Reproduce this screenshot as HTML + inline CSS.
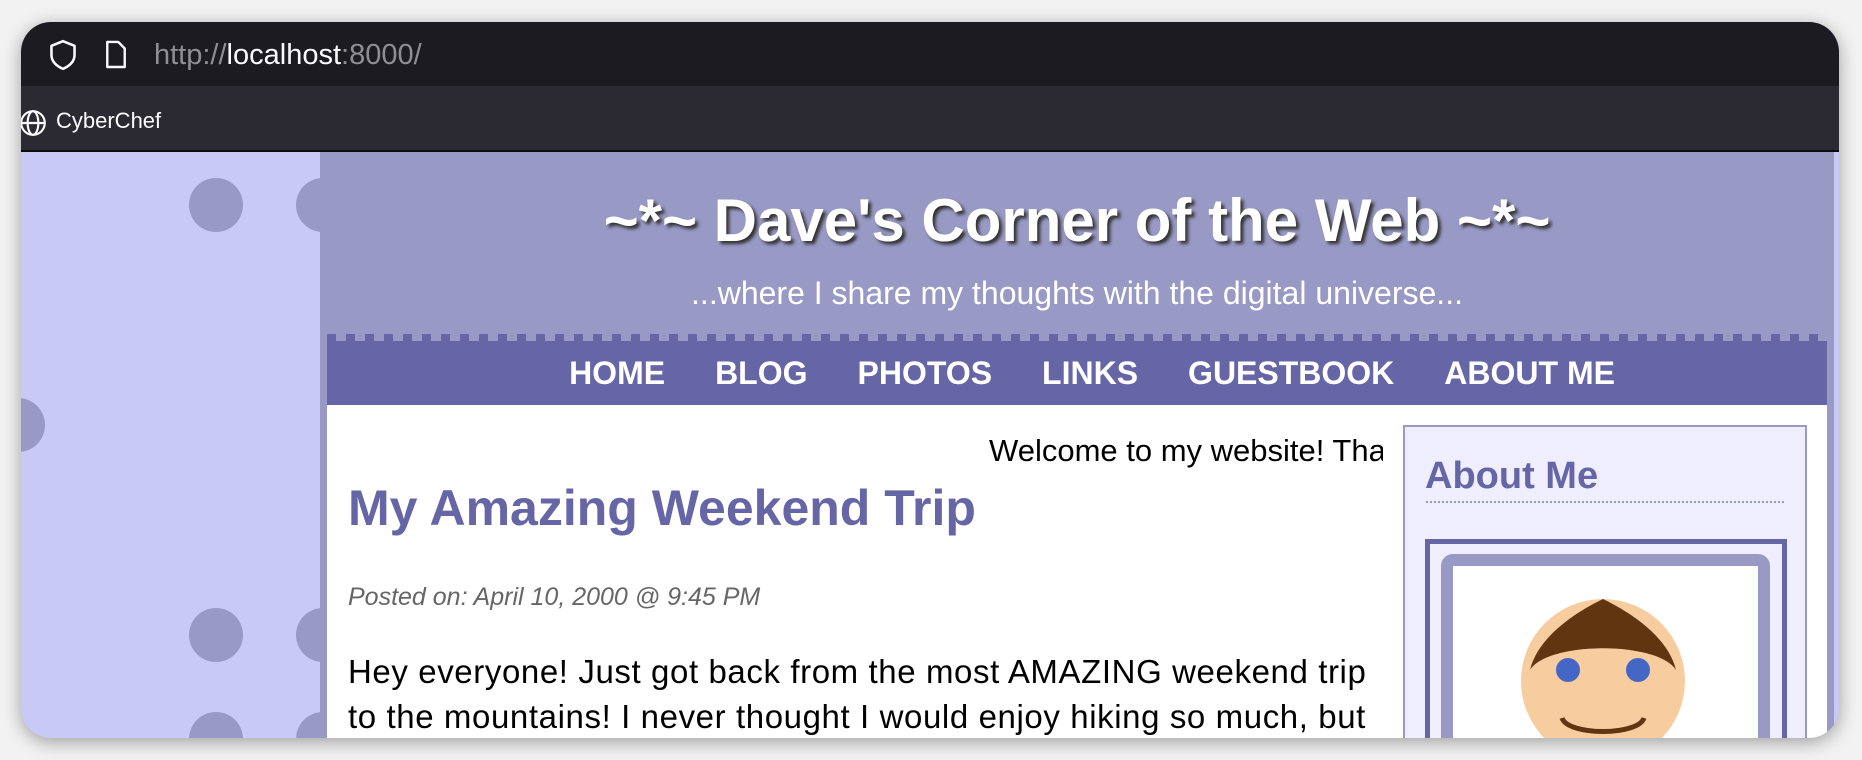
<!DOCTYPE html>
<html><head><meta charset="utf-8"><style>
*{margin:0;padding:0;box-sizing:border-box}
body{width:1862px;height:760px;background:#f2f2f2;overflow:hidden;font-family:"Liberation Sans",sans-serif;position:relative}
.win{position:absolute;left:21px;top:22px;width:1818px;height:716px;border-radius:30px;overflow:hidden;background:#c9c9f5;box-shadow:0 4px 18px rgba(0,0,0,.35)}
.bar1{position:absolute;left:0;top:0;width:100%;height:64px;background:#1c1b22}
.bar2{position:absolute;left:0;top:64px;width:100%;height:66px;background:#2b2a33;border-bottom:2px solid #0c0c0d}
.url{position:absolute;left:133px;top:17px;font-size:29px;color:#8e8e93;white-space:nowrap}
.url b{color:#fbfbfe;font-weight:normal}
.bm{position:absolute;left:35px;top:22px;font-size:22px;color:#fbfbfe;white-space:nowrap}
.dot{position:absolute;width:54px;height:54px;border-radius:50%;background:#9999c6}
.main{position:absolute;left:299px;top:130px;width:1514px;height:586px;background:#9999c6;overflow:hidden}
.title{position:absolute;left:0;width:100%;top:34px;text-align:center;color:#fff;font-weight:bold;font-size:60px;white-space:nowrap;text-shadow:3px 3px 3px #333}
.sub{position:absolute;left:0;width:100%;top:123px;text-align:center;color:#fff;font-size:32px;white-space:nowrap}
.nav{position:absolute;left:7px;top:182px;width:1500px;height:71px;background:#6666a6;border-top:7px solid transparent;background-clip:padding-box;display:flex;justify-content:center;gap:50px;padding-top:14px;padding-left:30px}
.nav a{color:#fff;font-weight:bold;font-size:32px;text-decoration:none;white-space:nowrap}
.content{position:absolute;left:7px;top:253px;width:1500px;height:340px;background:#fff}
.wel{position:absolute;left:662px;top:28px;width:394px;overflow:hidden;white-space:nowrap;font-size:31px;color:#000}
h1{position:absolute;left:21px;top:74px;font-size:50px;color:#6666a6;white-space:nowrap}
.posted{position:absolute;left:21px;top:178px;font-size:25px;font-style:italic;color:#666;white-space:nowrap}
.body{position:absolute;left:21px;top:244px;font-size:33px;letter-spacing:0.6px;line-height:45px;color:#000;width:1100px;white-space:nowrap}
.side{position:absolute;left:1076px;top:20px;width:404px;height:400px;background:#eeeefd;border:2px solid #9999c6}
.side h2{position:absolute;left:20px;top:28px;font-size:38px;color:#6666a6}
.dotl{position:absolute;left:21px;top:74px;width:358px;border-top:2px dotted #9999c6}
.pf{position:absolute;left:20px;top:112px;width:362px;height:300px;border:5px solid #6666a6}
.pi{position:absolute;left:11px;top:10px;width:329px;height:300px;border:12px solid #9999c6;border-radius:12px;background:#fff}
</style></head><body>
<div class="win">
<div class="bar1">
<svg style="position:absolute;left:27px;top:16px" width="30" height="34" viewBox="0 0 26 28"><path d="M13 2 L23 6 V14 C23 20 18 24 13 26 C8 24 3 20 3 14 V6 Z" fill="none" stroke="#fbfbfe" stroke-width="2.2" stroke-linejoin="round"/></svg>
<svg style="position:absolute;left:83px;top:17px" width="24" height="32" viewBox="0 0 22 28"><path d="M3 2 H13 L19 8 V25 H3 Z" fill="none" stroke="#fbfbfe" stroke-width="2.2" stroke-linejoin="round"/></svg>
<div class="url">http://<b>localhost</b>:8000/</div>
</div>
<div class="bar2">
<svg style="position:absolute;left:-3px;top:22px" width="30" height="30" viewBox="0 0 28 28"><g fill="none" stroke="#fbfbfe" stroke-width="2"><circle cx="14" cy="14" r="11"/><ellipse cx="14" cy="14" rx="5" ry="11"/><path d="M3 14H25"/></g></svg>
<div class="bm">CyberChef</div>
</div>
<div class="dot" style="left:168px;top:156px"></div>
<div class="dot" style="left:275px;top:156px"></div>
<div class="dot" style="left:-30px;top:376px"></div>
<div class="dot" style="left:168px;top:586px"></div>
<div class="dot" style="left:275px;top:586px"></div>
<div class="dot" style="left:168px;top:690px"></div>
<div class="dot" style="left:275px;top:690px"></div>
<div class="main">
<div class="title">~*~ Dave's Corner of the Web ~*~</div>
<div class="sub">...where I share my thoughts with the digital universe...</div>
<div class="nav">
<div style="position:absolute;left:0;top:-7px;width:100%;height:7px;background:repeating-linear-gradient(90deg,#6666a6 0 9px,#9999c6 9px 19px)"></div>
<a>HOME</a><a>BLOG</a><a>PHOTOS</a><a>LINKS</a><a>GUESTBOOK</a><a>ABOUT ME</a>
</div>
<div class="content">
<div class="wel">Welcome to my website! Thanks for visiting</div>
<h1>My Amazing Weekend Trip</h1>
<div class="posted">Posted on: April 10, 2000 @ 9:45 PM</div>
<div class="body">Hey everyone! Just got back from the most AMAZING weekend trip<br>to the mountains! I never thought I would enjoy hiking so much, but</div>
<div class="side">
<h2>About Me</h2><div class="dotl"></div>
<div class="pf"><div class="pi">
<svg style="position:absolute;left:65px;top:30px" width="170" height="170" viewBox="0 0 170 170">
<circle cx="85" cy="85" r="82" fill="#f7cd9f"/>
<path d="M12 74 C20 40 60 15 85 3 C110 15 150 40 158 74 C140 45 30 45 12 74 Z" fill="#603510"/>
<circle cx="50" cy="74" r="12" fill="#4466c4"/><circle cx="120" cy="74" r="12" fill="#4466c4"/>
<path d="M44 122 C50 140 120 140 126 122" fill="none" stroke="#603510" stroke-width="5"/>
</svg>
</div></div>
</div>
</div>
</div>
</div>
</body></html>
